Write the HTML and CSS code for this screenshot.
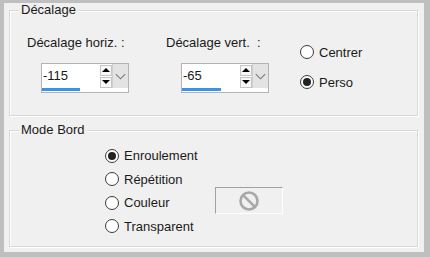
FILE: index.html
```html
<!DOCTYPE html>
<html lang="fr">
<head>
    <meta charset="UTF-8">
    <title>Décalage</title>
    <link rel="stylesheet" href="styles.css">
</head>
<body>
    <div class="dialog">
        <fieldset class="group group-offset">
            <legend>Décalage</legend>
            <div class="offset-row">
                <div class="field field-h">
                    <div class="field-label">Décalage horiz. :</div>
                    <div class="spin">
                        <div class="spin-top">
                            <span class="spin-value">-115</span>
                            <span class="spin-arrows">
                                <span class="arrow up"></span>
                                <span class="arrow down"></span>
                            </span>
                            <span class="spin-drop">
                                <svg width="16" height="24" viewBox="0 0 16 24"><polyline points="3,10 8,15 13,10" fill="none" stroke="#7c7c7c" stroke-width="1.2"/></svg>
                            </span>
                        </div>
                        <div class="spin-track"><div class="spin-fill" style="width: 38px"></div></div>
                    </div>
                </div>
                <div class="field field-v">
                    <div class="field-label">Décalage vert.&nbsp; :</div>
                    <div class="spin">
                        <div class="spin-top">
                            <span class="spin-value">-65</span>
                            <span class="spin-arrows">
                                <span class="arrow up"></span>
                                <span class="arrow down"></span>
                            </span>
                            <span class="spin-drop">
                                <svg width="16" height="24" viewBox="0 0 16 24"><polyline points="3,10 8,15 13,10" fill="none" stroke="#7c7c7c" stroke-width="1.2"/></svg>
                            </span>
                        </div>
                        <div class="spin-track"><div class="spin-fill" style="width: 39px"></div></div>
                    </div>
                </div>
                <div class="radios radios-pos">
                    <div class="radio"><span class="circle"></span>Centrer</div>
                    <div class="radio checked"><span class="circle"></span>Perso</div>
                </div>
            </div>
        </fieldset>

        <fieldset class="group group-edge">
            <legend>Mode Bord</legend>
            <div class="edge-row">
                <div class="radios radios-edge">
                    <div class="radio checked"><span class="circle"></span>Enroulement</div>
                    <div class="radio"><span class="circle"></span>Répétition</div>
                    <div class="radio"><span class="circle"></span>Couleur</div>
                    <div class="radio"><span class="circle"></span>Transparent</div>
                </div>
                <div class="color-btn">
                    <svg width="22" height="22" viewBox="0 0 22 22">
                        <circle cx="11" cy="11" r="8.5" fill="none" stroke="#a8a8a8" stroke-width="2.6"/>
                        <line x1="5.2" y1="5.2" x2="16.8" y2="16.8" stroke="#a8a8a8" stroke-width="2.6"/>
                    </svg>
                </div>
            </div>
        </fieldset>
    </div>
</body>
</html>
```

FILE: styles.css
```css
/* dialog layout */
body {
    margin: 0;
    background-color: #bfbfbf;
    font-family: "Liberation Sans", Arial, sans-serif;
    font-size: 13px;
    color: #1a1a1a;
}

.dialog {
    margin: 3px 6px 5px 4px;
    height: 249px;
    padding: 0 6px 0 5px;
    background-color: #f0f0f0;
    box-sizing: border-box;
}

.group {
    margin: 0;
    padding: 0;
    border: 1px solid #d8d8d8;
    box-shadow: inset 1px 1px 0 #fff, 1px 1px 0 #fff;
    box-sizing: border-box;
}

.group legend {
    margin-left: 9px;
    padding: 0 2px;
    line-height: 14px;
    background-color: #f0f0f0;
}

.group-offset {
    height: 113px;
}

.group-edge {
    margin-top: 7px;
    height: 124px;
}

/* offset fields */
.offset-row {
    display: flex;
    padding: 18px 0 0 17px;
}

.field-label {
    line-height: 15px;
    margin-bottom: 13px;
    white-space: nowrap;
}

.field-h {
    width: 139px;
}

.field-h .spin {
    margin-left: 14px;
}

.field-v {
    width: 134px;
}

.field-v .spin {
    margin-left: 15px;
}

.spin {
    width: 88px;
    height: 30px;
    border: 1px solid #b4b4b4;
    box-sizing: border-box;
    background-color: #fff;
}

.spin-top {
    display: flex;
    height: 24px;
}

.spin-value {
    width: 57px;
    padding-left: 1px;
    line-height: 24px;
}

.spin-arrows {
    width: 12px;
    display: flex;
    flex-direction: column;
    justify-content: center;
    gap: 1px;
}

.arrow {
    width: 12px;
    height: 11px;
    border: 1px solid #c4c4c4;
    box-sizing: border-box;
    background-color: #f7f7f7;
    display: flex;
    align-items: center;
    justify-content: center;
}

.arrow::after {
    content: "";
    border-left: 4px solid transparent;
    border-right: 4px solid transparent;
}

.arrow.up::after {
    border-bottom: 4px solid #000;
}

.arrow.down::after {
    border-top: 4px solid #000;
}

.spin-drop {
    width: 16px;
    background-color: #e3e3e3;
    border-left: 1px solid #cfcfcf;
    box-sizing: border-box;
    display: flex;
    justify-content: center;
}

.spin-track {
    height: 4px;
}

.spin-fill {
    height: 3px;
    background-color: #3c92e4;
}

/* radio buttons */
.radios {
    display: flex;
    flex-direction: column;
}

.radio {
    display: flex;
    align-items: center;
    gap: 5px;
    height: 24px;
    white-space: nowrap;
}

.circle {
    width: 14px;
    height: 14px;
    border: 1px solid #3a3a3a;
    border-radius: 50%;
    box-sizing: border-box;
    background-color: #fff;
    display: flex;
    align-items: center;
    justify-content: center;
}

.radio.checked .circle::after {
    content: "";
    width: 8px;
    height: 8px;
    border-radius: 50%;
    background-color: #222;
}

.radios-pos {
    margin-top: 5px;
    gap: 6px;
}

/* edge mode */
.edge-row {
    display: flex;
    padding: 7px 0 0 95px;
}

.radios-edge {
    width: 110px;
    gap: 0;
}

.radios-edge .radio {
    height: 23.5px;
}

.color-btn {
    margin-top: 43px;
    width: 68px;
    height: 27px;
    border-top: 1px solid #a0a0a0;
    border-left: 1px solid #a0a0a0;
    border-right: 1px solid #fff;
    border-bottom: 1px solid #fff;
    box-sizing: border-box;
    display: flex;
    align-items: center;
    justify-content: center;
}
```
